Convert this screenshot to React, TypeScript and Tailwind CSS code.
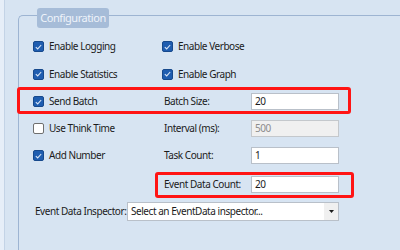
import React from "react";

const font = { fontFamily: '"Noto Sans", "Liberation Sans", sans-serif' };

function Check({ checked }: { checked: boolean }) {
  if (!checked) {
    return <span className="w-[11px] h-[11px] shrink-0 rounded-[2px] border border-[#6f6f6f] bg-white" />;
  }
  return (
    <span className="w-[11px] h-[11px] shrink-0 rounded-[2px] bg-[#1f5db0] border border-[#17498c] flex items-center justify-center">
      <svg width="7" height="6" viewBox="0 0 7 6">
        <path d="M0.8 3.1 L2.7 4.9 L6.2 1" stroke="#dbe7f7" strokeWidth="1.1" fill="none" />
      </svg>
    </span>
  );
}

function CheckItem({ label, checked, width }: { label: string; checked: boolean; width?: string }) {
  return (
    <div className={`flex items-center gap-[5px] ${width ?? ""}`}>
      <Check checked={checked} />
      <span className="whitespace-nowrap">{label}</span>
    </div>
  );
}

function Field({ label, value, disabled }: { label: string; value: string; disabled?: boolean }) {
  return (
    <div className="flex items-center">
      <span className="w-[89px] pl-[2px] whitespace-nowrap">{label}</span>
      <div
        className={`w-[88px] h-[17px] border flex items-center pl-[3px] ${
          disabled ? "bg-[#f0f0f0] border-[#c4c8cc] text-[#8c8c8c]" : "bg-white border-[#b9c0c9]"
        }`}
      >
        {value}
      </div>
    </div>
  );
}

export default function App() {
  return (
    <div
      className="w-[400px] h-[250px] overflow-hidden bg-[#d7e4f2] flex text-[10px] tracking-[-0.45px] text-[#1b1b1b] relative"
      style={font}
    >
      <div className="w-[4px] bg-[#e6eef8]" />
      <div className="w-[1px] bg-[#c3d3e6]" />

      <div className="ml-[13px] mt-[15px] flex-1 border-l border-t border-[#9db4d2] rounded-tl-[5px] relative">
        <div className="absolute left-[18px] top-[-8px] w-[72px] h-[20px] rounded-[3px] bg-[#a6bcd8] text-[#eef3fa] text-[11px] flex items-center justify-center">
          Configuration
        </div>

        <div className="pl-[14px] pt-[17px]">
          <div className="h-[27px] flex items-center">
            <CheckItem label="Enable Logging" checked width="w-[129px]" />
            <CheckItem label="Enable Verbose" checked />
          </div>
          <div className="h-[28px] flex items-center">
            <CheckItem label="Enable Statistics" checked width="w-[129px]" />
            <CheckItem label="Enable Graph" checked />
          </div>
          <div className="h-[27px] flex items-center">
            <CheckItem label="Send Batch" checked width="w-[129px]" />
            <Field label="Batch Size:" value="20" />
          </div>
          <div className="h-[27px] flex items-center">
            <CheckItem label="Use Think Time" checked={false} width="w-[129px]" />
            <Field label="Interval (ms):" value="500" disabled />
          </div>
          <div className="h-[27px] flex items-center">
            <CheckItem label="Add Number" checked width="w-[129px]" />
            <Field label="Task Count:" value="1" />
          </div>
          <div className="h-[31px] flex items-center pl-[129px]">
            <Field label="Event Data Count:" value="20" />
          </div>
          <div className="h-[22px] flex items-center">
            <span className="w-[94px] pl-[2px] whitespace-nowrap">Event Data Inspector:</span>
            <div className="w-[212px] h-[19px] bg-white border border-[#b9c0c9] flex items-center">
              <span className="flex-1 pl-[3px] whitespace-nowrap">Select an EventData inspector...</span>
              <span className="w-[14px] h-full bg-[#f0f0f0] flex items-center justify-center">
                <svg width="5" height="3" viewBox="0 0 5 3">
                  <path d="M0 0 H5 L2.5 3 Z" fill="#1b1b1b" />
                </svg>
              </span>
            </div>
          </div>
        </div>
      </div>

      <div className="absolute left-[17px] top-[87px] w-[334px] h-[27px] border-[3px] border-[#ff1414] rounded-[3px] pointer-events-none" />
      <div className="absolute left-[155px] top-[172px] w-[199px] h-[26px] border-[3px] border-[#ff1414] rounded-[3px] pointer-events-none" />
    </div>
  );
}
